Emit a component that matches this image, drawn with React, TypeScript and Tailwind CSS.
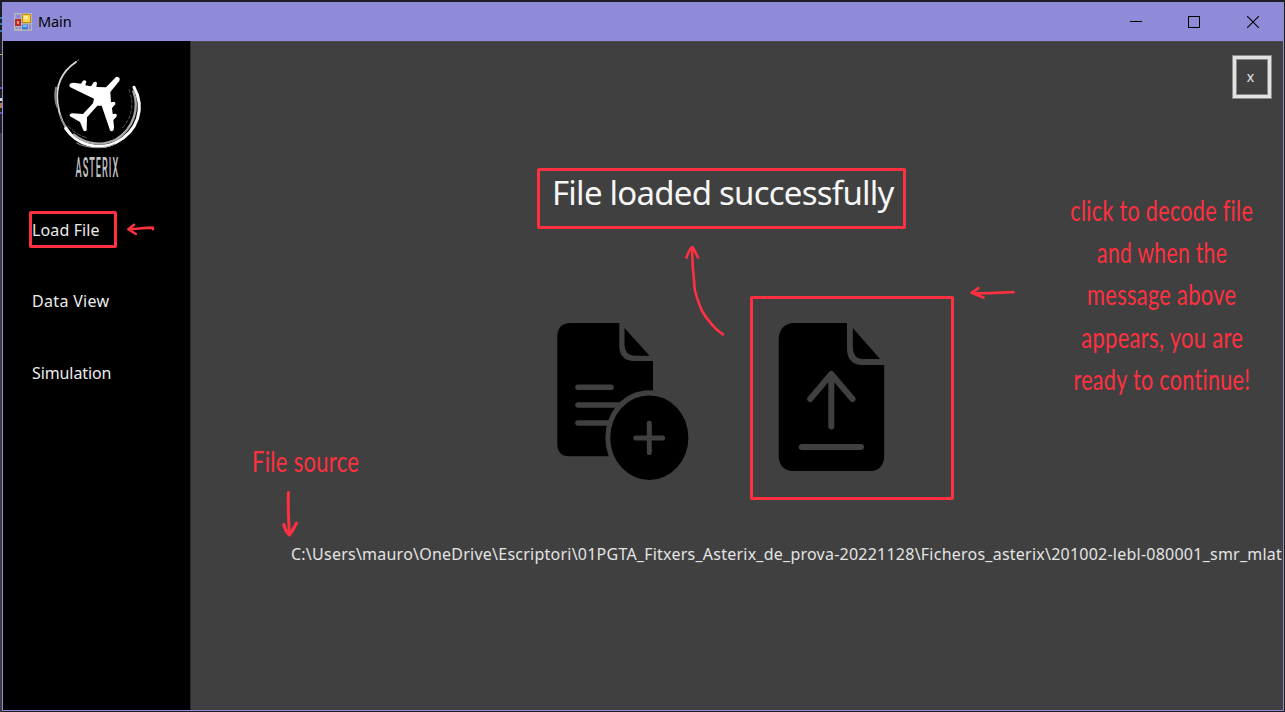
import type { ReactNode } from "react";

const RED = "#ff3040";

function FormIcon() {
  return (
    <svg width="18" height="18" viewBox="0 0 18 18">
      <rect width="18" height="18" fill="#b4b4bb" />
      <rect x="1.5" y="1.5" width="5" height="4" fill="#9089d6" />
      <rect x="8" y="1" width="9" height="9" fill="#c58a0c" />
      <rect x="9" y="2" width="7" height="7" fill="#ffd34d" />
      <rect x="10" y="3" width="4" height="3" fill="#fff0a0" />
      <rect x="1" y="6" width="6" height="7" fill="#b52a2a" />
      <rect x="3" y="8" width="2" height="3" fill="#ef8f86" />
      <rect x="8" y="11.5" width="6" height="5" fill="#3f7fd8" />
      <rect x="9" y="12" width="4" height="2" fill="#7db4f5" />
      <rect x="1.5" y="14" width="2" height="2" fill="#9089d6" />
      <rect x="4.5" y="14" width="2" height="2" fill="#9089d6" />
      <rect x="15" y="11.5" width="2" height="5" fill="#9089d6" />
    </svg>
  );
}

function TitleBar() {
  return (
    <header className="flex h-[39px] shrink-0 items-center bg-[#908bd9] pl-[11px] text-black">
      <FormIcon />
      <span className="ml-[6px] grow pb-[2px] text-[14.5px] leading-5 tracking-[-0.1px]">Main</span>
      <div className="flex items-center pr-[24px]">
        <svg className="mr-[46px]" width="12" height="12" viewBox="0 0 12 12" shapeRendering="crispEdges">
          <path d="M0 5h12v1H0z" />
        </svg>
        <svg className="mr-[47px]" width="12" height="12" viewBox="0 0 12 12" shapeRendering="crispEdges">
          <path d="M.5.5h11v11H.5z" fill="none" stroke="#000" />
        </svg>
        <svg width="12" height="12" viewBox="0 0 12 12">
          <path d="M0 0L12 12M12 0L0 12" stroke="#000" strokeWidth="1.1" />
        </svg>
      </div>
    </header>
  );
}

function Logo() {
  return (
    <div className="ml-[47px] flex h-[145px] w-[100px] flex-col items-center pt-[12px]">
      <svg width="100" height="100" viewBox="150 160 300 300" className="shrink-0">
        <g fill="none" strokeLinecap="round">
          <path d="M236 180L218 195" stroke="#777" strokeWidth="3" />
          <path d="M228 187C185 216 166 260 173 312C178 350 190 378 212 402" stroke="#d8d8d8" strokeWidth="5.5" />
          <path d="M168 264C164 285 166 305 172 322" stroke="#888" strokeWidth="6" />
          <path d="M180 345C183 360 191 373 203 386" stroke="#888" strokeWidth="4" />
          <path d="M197 386C232 438 300 453 348 428C414 395 436 325 402 263" stroke="#fff" strokeWidth="9" />
          <path d="M222 405C262 438 314 438 350 418C401 386 419 325 400 275" stroke="#aaa" strokeWidth="7" />
          <path d="M387 270C403 312 397 350 368 384" stroke="#555" strokeWidth="3" strokeDasharray="9 7" />
          <path d="M204 378C220 397 242 410 264 415" stroke="#555" strokeWidth="3" strokeDasharray="12 6" />
          <path d="M230 430C260 447 315 450 345 433" stroke="#999" strokeWidth="3" />
        </g>
        <path
          d="M348 232L318 263L289 262L291 250Q288 244 281 248L273 260L256 257L259 245Q254 240 249 243L243 252L222 249Q208 250 208 257Q208 262 214 264L282 297L279 311L249 343L216 341Q206 344 210 350L240 367L250 392Q255 398 260 391L261 353L292 318L305 318L330 392Q336 398 341 390L342 382L340 361L349 352Q353 343 346 342L338 343L336 325L346 314Q347 306 341 306L333 308L331 277L358 244Q362 232 351 231Z"
          fill="#fff"
        />
      </svg>
      <div className="mt-[1px] flex h-[28px] items-center justify-center pr-[5px]">
        <span className="origin-center scale-x-[0.34] whitespace-nowrap font-['Roboto',sans-serif] text-[27px] leading-[28px] font-medium tracking-[3px] text-[#c4c4c4]">
          ASTERIX
        </span>
      </div>
    </div>
  );
}

function Sidebar() {
  return (
    <aside className="flex w-[188px] shrink-0 flex-col border-r border-[#2b2b2b] bg-black">
      <Logo />
      <nav className="mt-[32px] flex flex-col gap-[47.4px] pl-[29px] text-[16px] leading-6 text-[#ececec]">
        <span className="tracking-[0.12px]">Load File</span>
        <span className="tracking-[0.32px]">Data View</span>
        <span className="tracking-[-0.1px]">Simulation</span>
      </nav>
    </aside>
  );
}

function AddFileIcon() {
  return (
    <svg width="132" height="158" viewBox="557 323 132 158">
      <path d="M569 323H619.3V347Q620 360.7 634 361H653V456.3H569Q557.3 456 557.3 444V336Q558 324 569 323Z" />
      <path d="M624.5 328L649.5 355.7H634Q625 355 624.5 345Z" />
      <path d="M578 387.3H611M578 405H625M578 423H615" stroke="#404040" strokeWidth="5.6" strokeLinecap="round" />
      <ellipse cx="649.3" cy="437.7" rx="44" ry="47.5" fill="#404040" />
      <ellipse cx="649.3" cy="437.7" rx="39.1" ry="42.3" />
      <path d="M649.3 423.3V452.5M635.8 438H662.6" stroke="#404040" strokeWidth="5" strokeLinecap="round" />
    </svg>
  );
}

function UploadFileIcon() {
  return (
    <svg width="107" height="149" viewBox="778 323 107 149">
      <path d="M792 323H847V350Q848 364 861 365H884.2V457Q883 470 872 471H792Q780 470 778.7 457V338Q780 325 792 323Z" />
      <path d="M852.8 328L880 359H862Q853 358.5 852.8 347Z" />
      <path
        d="M831.3 426.5V374M810.2 399L831.3 374L852.5 399M801.8 447H861"
        fill="none"
        stroke="#404040"
        strokeWidth="6"
        strokeLinecap="round"
        strokeLinejoin="round"
      />
    </svg>
  );
}

function LoadFilePanel() {
  return (
    <main className="flex min-w-0 grow flex-col overflow-hidden border-t border-[#4c4c50] bg-[#404040]">
      <div className="flex justify-end pt-[13px] pr-[11px]">
        <button className="flex h-[44px] w-[40px] items-center justify-center border border-[#8a8a8a] bg-[#e2e2e2] p-[3px]">
          <span className="flex h-full w-full items-center justify-center border border-[#8a8a8a] bg-[#404040] pr-[3px] text-[14px] leading-none text-[#e8e8e8]">
            x
          </span>
        </button>
      </div>
      <h1 className="mt-[70px] ml-[361px] text-[33px] leading-[48px] tracking-[-0.76px] whitespace-nowrap text-[#f6f6f6]">
        File loaded successfully
      </h1>
      <div className="mt-[106px] ml-[366px] flex items-start gap-[89px]">
        <AddFileIcon />
        <UploadFileIcon />
      </div>
      <p className="mt-[61px] ml-[100px] text-[16px] leading-6 tracking-[0.235px] whitespace-nowrap text-[#e4e4e4]">
        C:\Users\mauro\OneDrive\Escriptori\01PGTA_Fitxers_Asterix_de_prova-20221128\Ficheros_asterix\201002-lebl-080001_smr_mlat
      </p>
    </main>
  );
}

function Note({ className, children }: { className: string; children: ReactNode }) {
  return <span className={`block whitespace-nowrap ${className}`}>{children}</span>;
}

function Annotations() {
  return (
    <div className="pointer-events-none absolute inset-0 text-[#ff3040]">
      <div className="absolute top-[211px] left-[29px] h-[37px] w-[88px] rounded-[2px] border-3 border-[#ff3040]" />
      <div className="absolute top-[168px] left-[537px] h-[61px] w-[369px] rounded-[2px] border-3 border-[#ff3040]" />
      <div className="absolute top-[296px] left-[750px] h-[204px] w-[204px] rounded-[2px] border-3 border-[#ff3040]" />
      <svg className="absolute inset-0" width="1285" height="712" fill="none" stroke={RED} strokeWidth="2.6" strokeLinecap="round" strokeLinejoin="round">
        <path d="M153 229.2L152.6 227.6C145 227.6 137 228.8 128.5 229.2M134 224.8L128.3 229.2L135.8 234" />
        <path d="M723 334.3C716 330 707 320 701.5 310C698 301 695 294 694.5 287C694 275 691.8 268 692.3 247M686.5 257.5C688.5 252 690.5 247 692.3 247C694 248 696 254 698 257.5" />
        <path d="M1013.5 292.3C1003 292 992 293.8 972 293M978.5 288.2L971.5 292.8L983.5 297.5" />
        <path d="M288.4 492.5C287.8 505 288.6 520 289.4 534M283.8 524.5C285 529 287 533 289.4 535C292 532 294.5 527 296.5 523" strokeWidth="3" />
      </svg>
      <div className="absolute top-[188.5px] left-[1062px] flex w-[200px] flex-col items-center font-['Lato',sans-serif] text-[28px] leading-[42.4px] tracking-[0.4px] [font-variant-ligatures:none]">
        <Note className="scale-x-[0.77]">click to decode file</Note>
        <Note className="scale-x-[0.755]">and when the</Note>
        <Note className="scale-x-[0.78]">message above</Note>
        <Note className="scale-x-[0.785]">appears, you are</Note>
        <Note className="scale-x-[0.77]">ready to continue!</Note>
      </div>
      <div className="absolute top-[439.5px] left-[252px] font-['Lato',sans-serif] text-[28px] leading-[42.4px] tracking-[0.4px] [font-variant-ligatures:none]">
        <Note className="origin-left scale-x-[0.785]">File source</Note>
      </div>
    </div>
  );
}

function EdgeStrip() {
  return (
    <div className="flex w-[2px] shrink-0 flex-col bg-[#1e1e22]">
      <div className="mt-[17px] h-[2px] bg-[#3178b5]" />
      <div className="mt-[4px] h-[2px] bg-[#3178b5]" />
      <div className="mt-[5px] h-[2px] bg-[#3178b5]" />
      <div className="mt-[22px] h-[1px] bg-[#c9b458]" />
      <div className="mt-[32px] h-[2px] bg-[#5f55b8]" />
      <div className="mt-[9px] h-[3px] bg-[#d8d8d8]" />
      <div className="mt-[2px] h-[5px] bg-[#b57a55]" />
      <div className="mt-[4px] h-[2px] bg-[#5f55b8]" />
      <div className="mt-[19px] grow bg-[#3b3b42]" />
    </div>
  );
}

export default function App() {
  return (
    <div className="relative flex h-[712px] w-[1285px] overflow-hidden bg-[#1f1d22] font-['Noto_Sans',sans-serif]">
      <EdgeStrip />
      <div className="mt-[2px] flex h-[709px] w-[1282px] flex-col border-x border-b border-[#908bd9]">
        <TitleBar />
        <div className="flex min-h-0 grow">
          <Sidebar />
          <LoadFilePanel />
        </div>
      </div>
      <Annotations />
    </div>
  );
}
